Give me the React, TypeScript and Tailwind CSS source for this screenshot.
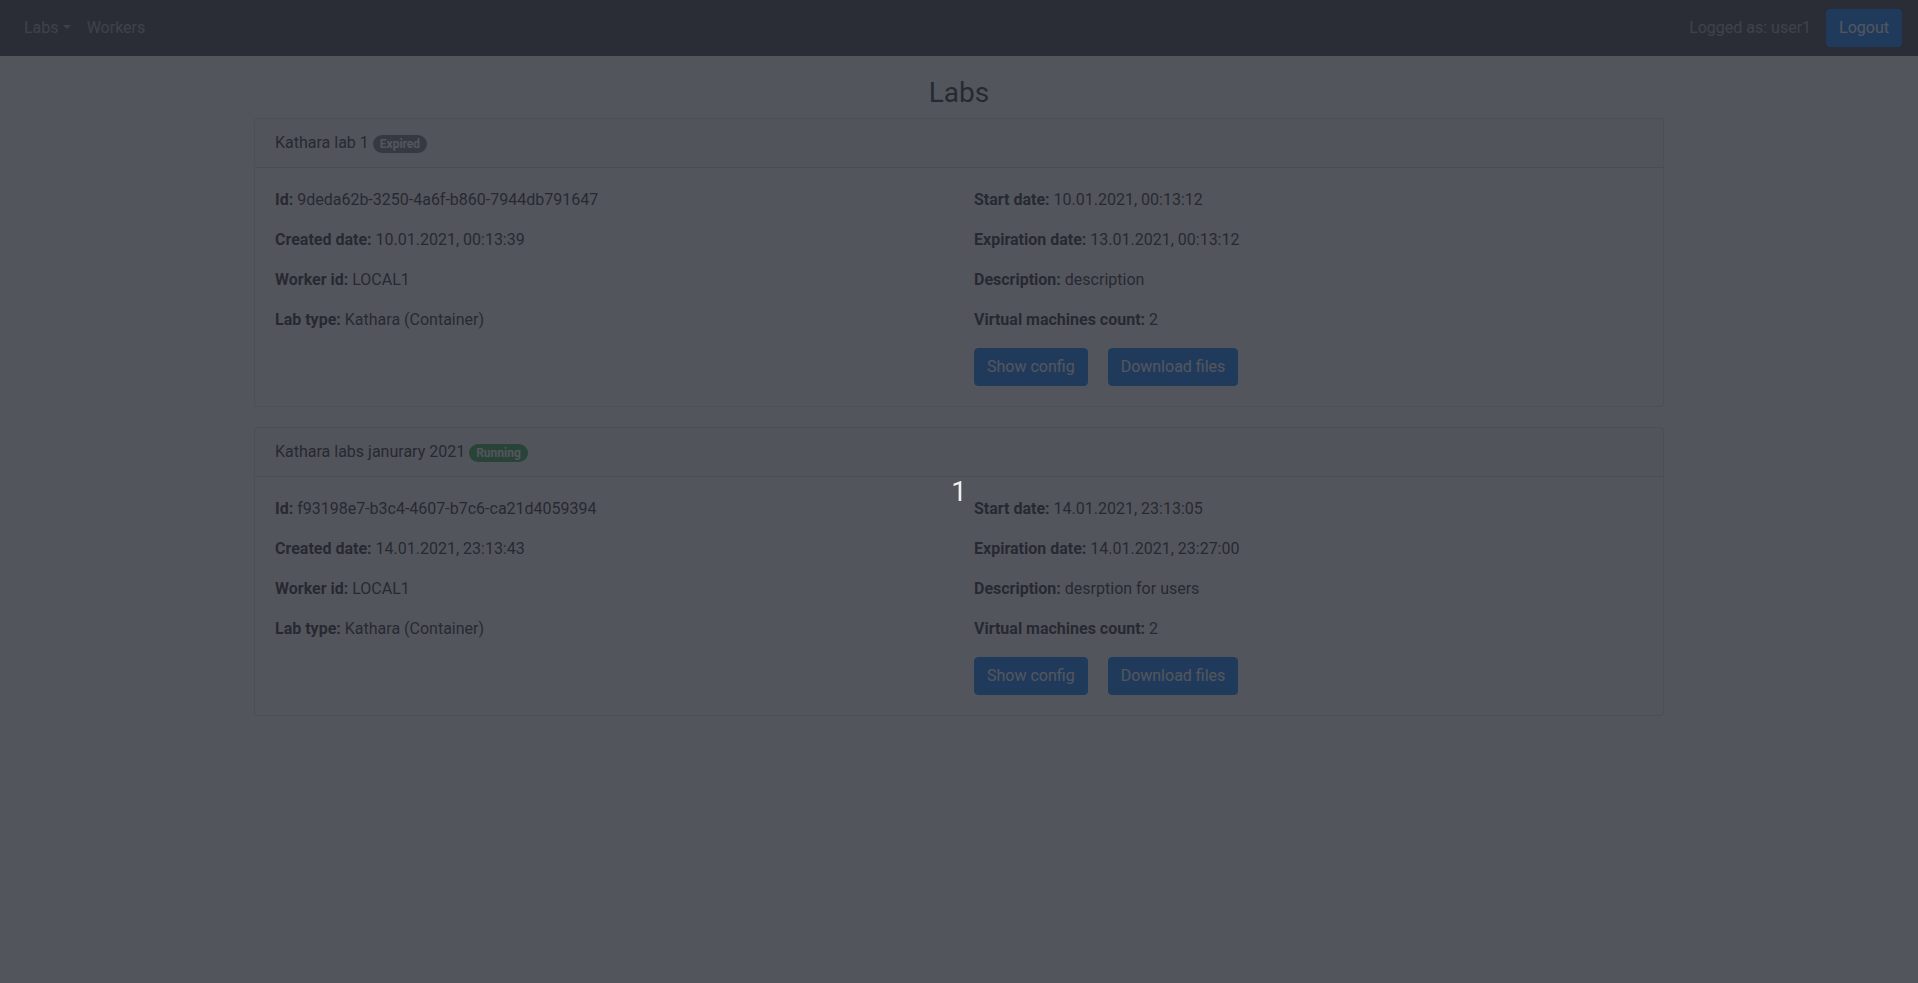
import React from "react";

type Lab = {
  name: string;
  status: "Expired" | "Running";
  id: string;
  created: string;
  worker: string;
  type: string;
  start: string;
  expiration: string;
  description: string;
  vms: string;
};

const labs: Lab[] = [
  {
    name: "Kathara lab 1",
    status: "Expired",
    id: "9deda62b-3250-4a6f-b860-7944db791647",
    created: "10.01.2021, 00:13:39",
    worker: "LOCAL1",
    type: "Kathara (Container)",
    start: "10.01.2021, 00:13:12",
    expiration: "13.01.2021, 00:13:12",
    description: "description",
    vms: "2",
  },
  {
    name: "Kathara labs janurary 2021",
    status: "Running",
    id: "f93198e7-b3c4-4607-b7c6-ca21d4059394",
    created: "14.01.2021, 23:13:43",
    worker: "LOCAL1",
    type: "Kathara (Container)",
    start: "14.01.2021, 23:13:05",
    expiration: "14.01.2021, 23:27:00",
    description: "desrption for users",
    vms: "2",
  },
];

function Field({ label, value }: { label: string; value: string }) {
  return (
    <p className="mb-4">
      <strong className="font-bold">{label}:</strong> {value}
    </p>
  );
}

function Btn({ children }: { children: React.ReactNode }) {
  return (
    <button className="inline-block rounded-[4px] border border-[#007bff] bg-[#007bff] px-3 py-[6px] text-base leading-6 text-white">
      {children}
    </button>
  );
}

function LabCard({ lab }: { lab: Lab }) {
  return (
    <div className="mb-5 rounded-[4px] border border-[rgba(0,0,0,0.125)] bg-white">
      <div className="border-b border-[rgba(0,0,0,0.125)] bg-[rgba(0,0,0,0.03)] px-5 py-3">
        {lab.name}{" "}
        <span
          className={
            lab.status === "Expired"
              ? "inline-block rounded-[10rem] bg-[#6c757d] px-[7px] py-[3px] align-baseline text-[12px] font-bold leading-none text-white"
              : "inline-block rounded-[10rem] bg-[#28a745] px-[7px] py-[3px] align-baseline text-[12px] font-bold leading-none text-white"
          }
        >
          {lab.status}
        </span>
      </div>
      <div className="grid grid-cols-2 gap-x-[30px] p-5">
        <div>
          <Field label="Id" value={lab.id} />
          <Field label="Created date" value={lab.created} />
          <Field label="Worker id" value={lab.worker} />
          <Field label="Lab type" value={lab.type} />
        </div>
        <div>
          <Field label="Start date" value={lab.start} />
          <Field label="Expiration date" value={lab.expiration} />
          <Field label="Description" value={lab.description} />
          <Field label="Virtual machines count" value={lab.vms} />
          <div className="flex gap-5">
            <Btn>Show config</Btn>
            <Btn>Download files</Btn>
          </div>
        </div>
      </div>
    </div>
  );
}

export default function App() {
  return (
    <div className="relative min-h-screen bg-white font-['Roboto','Liberation_Sans',sans-serif] text-base leading-6 text-[#212529]">
      <nav className="flex h-14 items-center justify-between bg-[#343a40] px-4">
        <div className="flex items-center text-[rgba(255,255,255,0.5)]">
          <a className="px-2 py-2">
            Labs
            <span className="ml-[0.255em] inline-block border-x-[0.3em] border-t-[0.3em] border-b-0 border-x-transparent border-t-current align-[0.255em]" />
          </a>
          <a className="px-2 py-2">Workers</a>
        </div>
        <div className="flex items-center">
          <span className="py-2 text-[rgba(255,255,255,0.5)]">Logged as: user1</span>
          <div className="ml-[15px]">
            <Btn>Logout</Btn>
          </div>
        </div>
      </nav>
      <main className="mx-auto w-[1410px]">
        <h3 className="mt-5 mb-2 text-center text-[28px] font-normal leading-[1.2]">Labs</h3>
        {labs.map((lab) => (
          <LabCard key={lab.id} lab={lab} />
        ))}
      </main>
      <div className="fixed inset-0 flex items-center justify-center bg-[rgba(40,43,51,0.8)]">
        <span className="text-[28px] leading-none text-[#f0f0f0]">1</span>
      </div>
    </div>
  );
}
